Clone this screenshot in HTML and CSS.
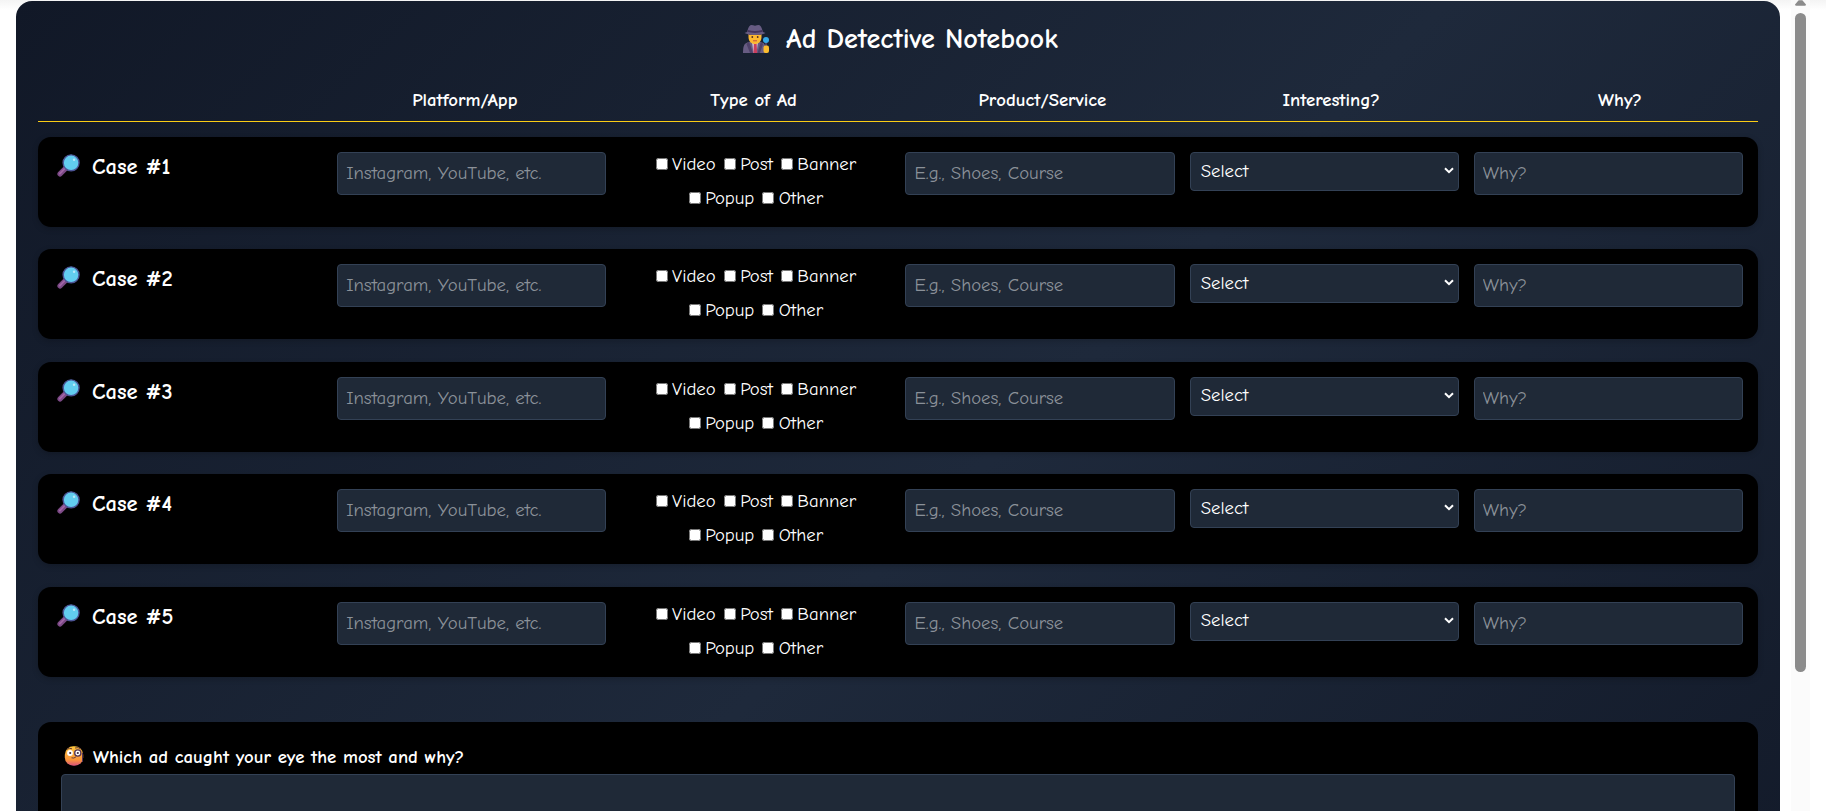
FILE: index.html
```
<!DOCTYPE html>
<html lang="en">
<head>
<meta charset="utf-8">
<title>Ad Detective Notebook</title>
<link rel="stylesheet" href="styles.css">
</head>
<body>
<svg class="defs" width="0" height="0" aria-hidden="true">
  <symbol id="lens" viewBox="0 0 24 24">
    <path d="M9.500 14.500 3.200 20.800" stroke="#7c4a86" stroke-width="5.500" stroke-linecap="round"/>
    <path d="M8 15.200 3 20.400" stroke="#a065a5" stroke-width="2" stroke-linecap="round"/>
    <circle cx="14.700" cy="9.200" r="8.300" fill="#62cdf0" stroke="#4c5596" stroke-width="1.500"/>
    <circle cx="17.800" cy="6" r="1.300" fill="#b9e9fb"/>
  </symbol>
</svg>
<main class="notebook">
  <h1 class="title">
    <svg class="title-icon" viewBox="0 0 26 28">
      <path d="M0 28c0-7 1-10 6-11h12c4 1 5 4 5 11z" fill="#675c83"/>
      <path d="M9 17h6l-1.500 11h-3z" fill="#d3c5da"/>
      <path d="M11 18.500h2.600l.6 9.500h-3.800z" fill="#c93e5e"/>
      <path d="M6 16.500 10 28H7L3.500 19zM18 16.500 14.500 28H17l3-9z" fill="#4d4169"/>
      <path d="M5.500 8h13v4c0 4.500-3 7-6.500 7s-6.500-2.500-6.500-7z" fill="#fdb931"/>
      <path d="M5.500 8.500h13v1.500h-13z" fill="#7a4a3a"/>
      <path d="M1.500 8c2-.5 2.500-1 3-2.500C5.500 1.500 7 0 8.500 0q1.500 0 3.500.8Q14 0 15.500 0C17 0 18.500 1.500 19.500 5.500c.5 1.500 1 2 3 2.500-4 2.500-17 2.500-21 0z" fill="#675c83"/>
      <path d="M4.800 5q7.200 2 14.400 0l.6 1.800q-7.800 2.200-15.600 0z" fill="#43345d"/>
      <circle cx="9.300" cy="12" r=".9" fill="#4b2b2b"/><circle cx="14.700" cy="12" r=".9" fill="#4b2b2b"/>
      <path d="M10 15.800h4" stroke="#c8503c"/>
      <path d="M23 17v5" stroke="#5d4a76" stroke-width="1.500"/>
      <rect x="20.500" y="20.500" width="5.500" height="7.500" rx="2" fill="#fdbd2e"/>
      <circle cx="23" cy="15" r="3" fill="#36a9e8"/>
    </svg>
    <span>Ad Detective Notebook</span>
  </h1>
  <div class="head">
    <span></span><span>Platform/App</span><span>Type of Ad</span><span>Product/Service</span><span>Interesting?</span><span>Why?</span>
  </div>
  <div class="cases" id="cases"></div>
  <section class="reflect">
    <div class="question">
      <svg class="face" viewBox="0 0 20 20">
        <defs><linearGradient id="skin" x1="0" y1="0" x2="0" y2="1"><stop offset="0" stop-color="#ffc83d"/><stop offset=".7" stop-color="#f9943b"/><stop offset="1" stop-color="#d8527c"/></linearGradient></defs>
        <rect x=".8" y=".3" width="18.400" height="19.400" rx="8.500" fill="url(#skin)"/>
        <path d="M18.500 7v9" stroke="#533456" fill="none"/>
        <circle cx="6" cy="7" r="2.900" fill="#fff"/><circle cx="13.800" cy="7" r="3.100" fill="#fff" stroke="#533456" stroke-width="1.300"/>
        <circle cx="6.200" cy="7" r="1.100" fill="#40283f"/><circle cx="13.800" cy="7" r="1.100" fill="#40283f"/>
        <path d="M3 3.300q2.500-1.800 5-.5M11 2q3-1.200 6 1M7.500 11.800q2.500 1 4.500-1" fill="none" stroke="#6b3d3a"/>
      </svg>
      <span>Which ad caught your eye the most and why?</span>
    </div>
    <textarea class="field answer"></textarea>
  </section>
</main>
<aside class="scrollbar">
  <svg class="arrow" viewBox="0 0 12 6"><path d="M4 0h4l4 4.500q0 1.500-1.500 1.500h-9Q0 6 0 4.500z" fill="#8b8b8b"/></svg>
  <div class="thumb"></div>
</aside>
<script src="cases.js"></script>
</body>
</html>
```
FILE: cases.js
```
const types = [["Video", "Post", "Banner"], ["Popup", "Other"]];
const option = t => `<label class="option"><input type="checkbox"><span>${t}</span></label>`;
document.getElementById("cases").innerHTML = [1, 2, 3, 4, 5].map(n => `
  <section class="case">
    <div class="case-name"><svg class="lens"><use href="#lens"/></svg><span>Case #${n}</span></div>
    <input class="field" placeholder="Instagram, YouTube, etc.">
    <div class="types">${types.map(r => `<div class="type-row">${r.map(option).join("")}</div>`).join("")}</div>
    <input class="field" placeholder="E.g., Shoes, Course">
    <div class="field select"><span>Select</span><svg viewBox="0 0 10 7"><path d="M1 1.200 5 5.200 9 1.200" fill="none" stroke="#fff" stroke-width="2"/></svg></div>
    <input class="field" placeholder="Why?">
  </section>`).join("");
```
FILE: styles.css
```
* { box-sizing: border-box; }
html { overflow: hidden; }
body {
  margin: 0;
  height: 811px;
  overflow: hidden;
  display: flex;
  gap: 11px;
  padding-left: 16px;
  background: linear-gradient(#f4f4f4, #fff 10px);
  color: #fff;
  font: 18.75px/34px "Comic Neue", Lato, sans-serif;
}
.defs { position: absolute; }
.notebook {
  width: 1764px;
  height: 810px;
  overflow: hidden;
  flex: none;
  margin-top: 1px;
  padding: 16px 22px 0;
  border-radius: 16px 16px 0 0;
  background: linear-gradient(135deg, #111827, #1e293b 50%, #111827) 0 0 / 1764px 1100px no-repeat;
}
.title {
  display: flex;
  justify-content: center;
  align-items: center;
  gap: 17px;
  height: 44px;
  margin: 0;
  padding-left: 5px;
  font-size: 28.2px;
  font-weight: 700;
  white-space: nowrap;
}
.title-icon { width: 26px; height: 28px; margin-top: -1px; }
.head {
  display: grid;
  grid-template-columns: repeat(6, 1fr);
  gap: 12.8px;
  height: 61px;
  padding-top: 22px;
  border-bottom: 1px solid #facc15;
  text-align: center;
  font-size: 18.8px;
  font-weight: 700;
}
.cases { display: grid; gap: 22.4px; padding-top: 15px; }
.case {
  display: grid;
  grid-template-columns: repeat(6, minmax(0, 1fr));
  align-items: start;
  gap: 15px;
  height: 90px;
  padding: 15px;
  border-radius: 13px;
  background: #000;
  box-shadow: 0 2px 6px rgba(0, 0, 0, .2);
}
.case-name { display: flex; gap: 12px; padding-left: 4px; height: 30px; align-items: center; font-size: 22.5px; font-weight: 700; }
.lens { width: 23px; height: 23px; margin-top: -3px; }
.field {
  width: 100%;
  height: 43px;
  padding: 0 8px 1px;
  border: 1px solid #334155;
  border-radius: 4px;
  background: #1f2937;
  color: #fff;
  font: inherit;
}
.field::placeholder { color: #8b9199; }
.select { height: 39px; display: flex; align-items: center; justify-content: space-between; padding: 0 4px 2px 10px; }
.select svg { width: 10px; height: 7px; }
.types { margin-top: -5px; }
.type-row { display: flex; justify-content: center; gap: 8px; height: 34px; }
.option { display: flex; align-items: center; gap: 4.5px; }
.option input { width: 12px; height: 12px; margin: 0; }
.reflect { margin-top: 45px; height: 260px; padding: 21px 23px; border-radius: 13px; background: #000; }
.question { display: flex; align-items: center; gap: 9px; height: 31px; padding: 0 0 3px 3px; font-size: 18.75px; font-weight: 700; }
.face { width: 20px; height: 20px; margin-top: -2px; }
.answer { display: block; height: 160px; resize: none; }
.scrollbar { width: 19px; height: 811px; padding: 0 4px; background: rgba(250, 250, 250, .8); }
.arrow { display: block; width: 11px; height: 6px; margin-bottom: 7px; }
.thumb { width: 11px; height: 659px; border-radius: 6px; background: #8b8b8b; }
```
